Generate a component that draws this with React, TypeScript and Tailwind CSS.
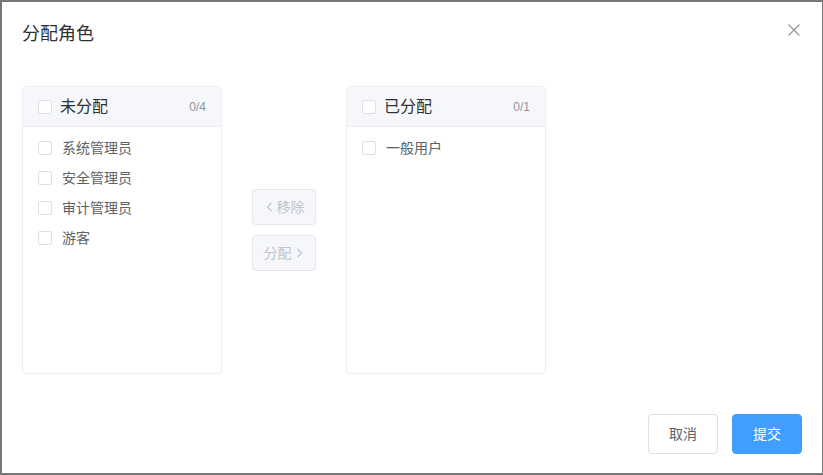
import React from 'react';

const Checkbox: React.FC = () => (
  <span className="inline-block w-[14px] h-[14px] shrink-0 rounded-[2px] border border-[#dcdfe6] bg-white" />
);

const ChevronLeft: React.FC = () => (
  <svg width="12" height="14" viewBox="0 0 12 14" fill="none" className="shrink-0 mr-[1px]">
    <path d="M7.5 3 L3.5 7 L7.5 11" stroke="#c0c4cc" strokeWidth="1.2" />
  </svg>
);

const ChevronRight: React.FC = () => (
  <svg width="12" height="14" viewBox="0 0 12 14" fill="none" className="shrink-0 ml-[1px]">
    <path d="M4.5 3 L8.5 7 L4.5 11" stroke="#c0c4cc" strokeWidth="1.2" />
  </svg>
);

type PanelProps = {
  title: string;
  count: string;
  items: string[];
};

const Panel: React.FC<PanelProps> = ({ title, count, items }) => (
  <div className="w-[200px] h-[288px] rounded-[4px] border border-[#ebeef5] bg-white overflow-hidden">
    <div className="relative flex items-center h-[40px] pl-[15px] bg-[#f5f7fa] border-b border-[#ebeef5]">
      <Checkbox />
      <span className="ml-[8px] text-[16px] text-[#303133]">{title}</span>
      <span className="absolute right-[15px] text-[12px] text-[#909399]">{count}</span>
    </div>
    <div className="pt-[6px]">
      {items.map((item) => (
        <div key={item} className="flex items-center h-[30px] pl-[15px]">
          <Checkbox />
          <span className="ml-[10px] text-[14px] text-[#606266]">{item}</span>
        </div>
      ))}
    </div>
  </div>
);

const App: React.FC = () => {
  const unassigned = ['系统管理员', '安全管理员', '审计管理员', '游客'];
  const assigned = ['一般用户'];

  return (
    <div
      className="w-[823px] h-[475px] bg-[#777777] pt-[2px] pl-[2px]"
      style={{ fontFamily: '"Liberation Sans", "Noto Sans CJK SC", sans-serif' }}
    >
      <div className="relative w-[820px] h-[471px] bg-white flex flex-col">
        {/* Header */}
        <div className="px-[20px] pt-[20px] pb-[10px]">
          <span className="block text-[18px] leading-[24px] text-[#303133]">分配角色</span>
        </div>
        <button className="absolute top-[22px] right-[22px] w-[12px] h-[12px]">
          <svg width="12" height="12" viewBox="0 0 12 12" fill="none">
            <path d="M0.5 0.5 L11.5 11.5 M11.5 0.5 L0.5 11.5" stroke="#909399" strokeWidth="1.1" />
          </svg>
        </button>

        {/* Body */}
        <div className="px-[20px] py-[30px] flex items-center">
          <Panel title="未分配" count="0/4" items={unassigned} />
          <div className="flex flex-col gap-[10px] mx-[30px]">
            <button className="flex items-center justify-center w-[64px] h-[36px] rounded-[4px] border border-[#e4e7ed] bg-[#f5f7fa] text-[14px] text-[#c0c4cc]">
              <ChevronLeft />
              <span>移除</span>
            </button>
            <button className="flex items-center justify-center w-[64px] h-[36px] rounded-[4px] border border-[#e4e7ed] bg-[#f5f7fa] text-[14px] text-[#c0c4cc]">
              <span>分配</span>
              <ChevronRight />
            </button>
          </div>
          <Panel title="已分配" count="0/1" items={assigned} />
        </div>

        {/* Footer */}
        <div className="flex justify-end gap-[14px] px-[20px] pt-[10px] pb-[20px]">
          <button className="w-[70px] h-[40px] rounded-[4px] border border-[#dcdfe6] bg-white text-[14px] text-[#606266]">
            取消
          </button>
          <button className="w-[70px] h-[40px] rounded-[4px] border border-[#409eff] bg-[#409eff] text-[14px] text-white">
            提交
          </button>
        </div>
      </div>
    </div>
  );
};

export default App;
